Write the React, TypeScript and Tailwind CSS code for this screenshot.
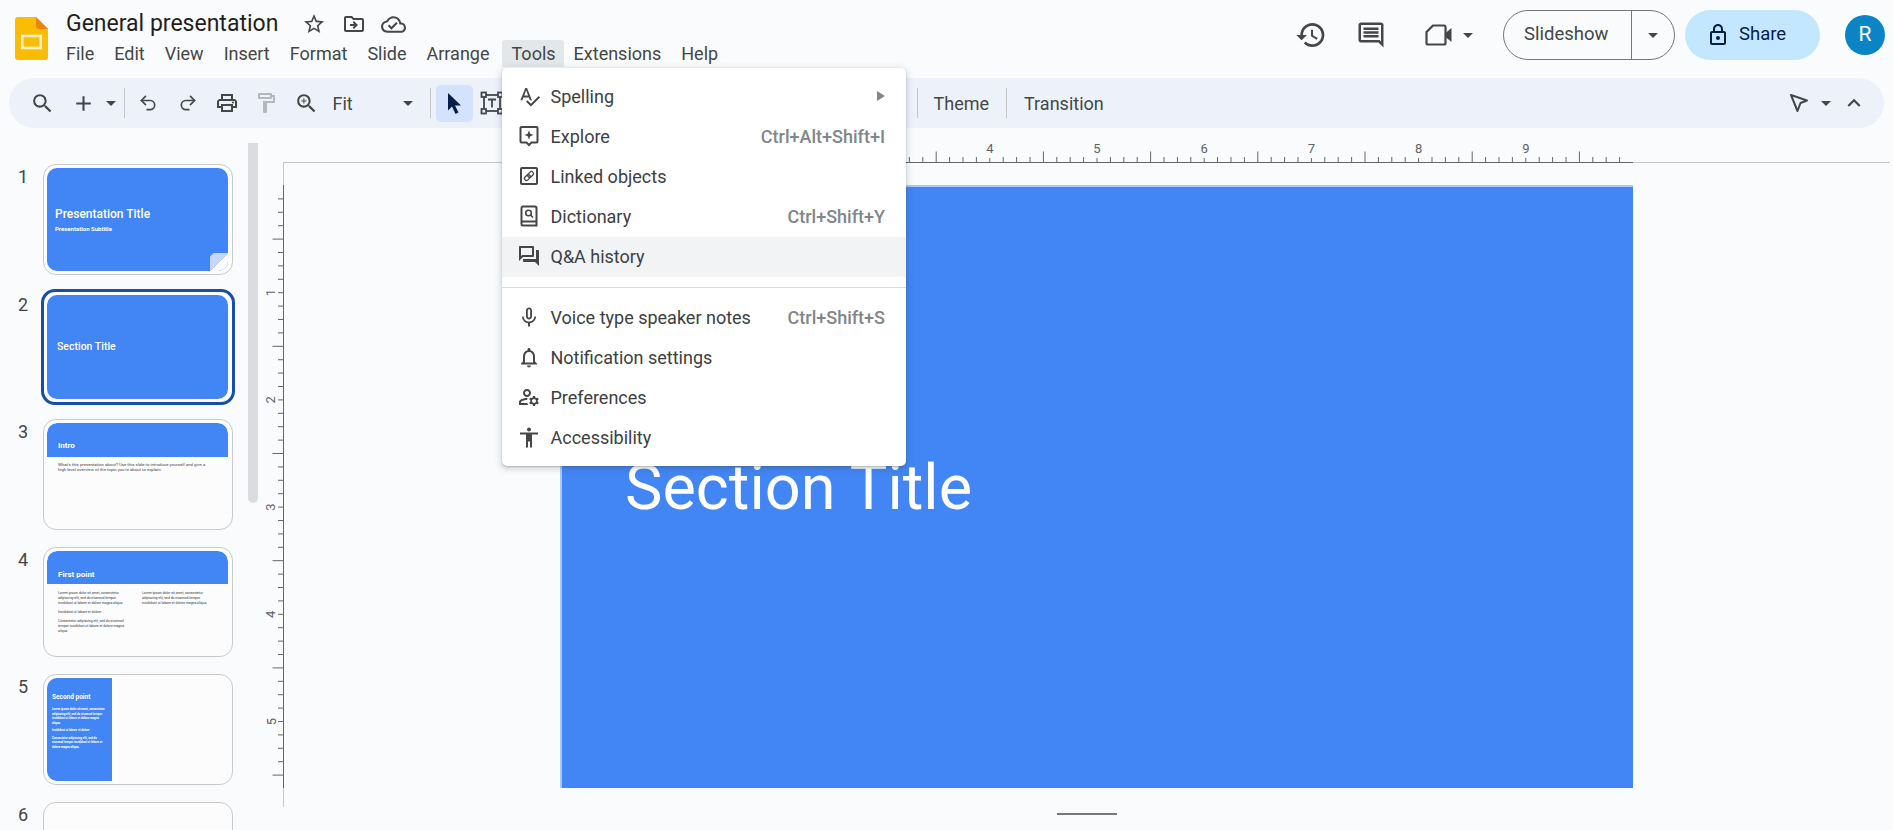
import {
  MdSearch, MdAdd, MdOutlinePrint, MdOutlineFormatPaint, MdOutlineZoomIn, MdOutlineStarBorder,
  MdOutlineDriveFileMove, MdOutlineCloudDone, MdHistory, MdOutlineComment, MdOutlineLock,
  MdSpellcheck, MdMicNone, MdNotificationsNone, MdAccessibility, MdOutlineManageAccounts,
  MdOutlineQuestionAnswer, MdKeyboardArrowUp,
} from 'react-icons/md'
import { Undo2, Redo2 } from 'lucide-react'
import type { ReactNode } from 'react'

const INCH = 107.2

function Caret({ className = '' }: { className?: string }) {
  return (
    <svg width="10" height="5" viewBox="0 0 10 5" className={className}>
      <path d="M0 0h10L5 5z" fill="currentColor" />
    </svg>
  )
}

function Logo() {
  return (
    <svg width="33" height="43" viewBox="0 0 33 43" className="shrink-0">
      <path d="M3 0h18l12 12v28a3 3 0 0 1-3 3H3a3 3 0 0 1-3-3V3a3 3 0 0 1 3-3z" fill="#fbbc04" />
      <path d="M21 0l12 12h-9a3 3 0 0 1-3-3z" fill="#ea8600" />
      <rect x="7.2" y="19" width="18.6" height="12" fill="none" stroke="#fff1c2" strokeWidth="2.6" />
    </svg>
  )
}

function TextBoxIcon() {
  return (
    <svg width="24" height="24" viewBox="0 0 24 24" fill="none" stroke="#444746" strokeWidth="1.8">
      <rect x="4" y="4" width="16" height="16" />
      <rect x="1.5" y="1.5" width="4.5" height="4.5" fill="#edf2fa" />
      <rect x="18" y="1.5" width="4.5" height="4.5" fill="#edf2fa" />
      <rect x="1.5" y="18" width="4.5" height="4.5" fill="#edf2fa" />
      <rect x="18" y="18" width="4.5" height="4.5" fill="#edf2fa" />
      <path d="M8 8.5h8M12 8.5v8" />
    </svg>
  )
}

function ExploreIcon() {
  return (
    <svg width="20" height="22" viewBox="0 0 20 22" fill="none">
      <path d="M2.5 2h15a1 1 0 0 1 1 1v13.5a1 1 0 0 1-1 1h-5L10 20l-2.5-2.5h-5a1 1 0 0 1-1-1V3a1 1 0 0 1 1-1z" stroke="#444746" strokeWidth="2" />
      <path d="M10 5.5l1.3 3.2 3.2 1.3-3.2 1.3L10 14.5l-1.3-3.2L5.5 10l3.2-1.3z" fill="#444746" />
    </svg>
  )
}

function LinkedIcon() {
  return (
    <svg width="20" height="20" viewBox="0 0 20 20" fill="none" stroke="#444746">
      <rect x="2" y="2" width="16" height="16" rx="1" strokeWidth="2" />
      <g transform="rotate(-45 10 10)" strokeWidth="1.3">
        <rect x="4.5" y="8" width="6.5" height="4" rx="2" />
        <rect x="9" y="8" width="6.5" height="4" rx="2" />
      </g>
    </svg>
  )
}

function DictionaryIcon() {
  return (
    <svg width="18" height="22" viewBox="0 0 18 22" fill="none" stroke="#444746" strokeWidth="2">
      <path d="M3 1.5h12a1.5 1.5 0 0 1 1.5 1.5v17.5H3A1.5 1.5 0 0 1 1.5 19V3A1.5 1.5 0 0 1 3 1.5z" />
      <path d="M1.5 16.5h15" />
      <circle cx="8.5" cy="8" r="2.8" strokeWidth="1.6" />
      <path d="M10.5 10l2.5 2.5" strokeWidth="1.6" />
    </svg>
  )
}

function MeetIcon() {
  return (
    <svg width="28" height="24" viewBox="0 0 28 24" fill="none">
      <path d="M8 2.5h11a1.5 1.5 0 0 1 1.5 1.5v16a1.5 1.5 0 0 1-1.5 1.5H3A1.5 1.5 0 0 1 1.5 20V9z" stroke="#444746" strokeWidth="2.2" strokeLinejoin="round" />
      <path d="M20.5 10l6-5v14l-6-5z" fill="#444746" />
    </svg>
  )
}

function CursorIcon() {
  return (
    <svg width="22" height="24" viewBox="0 0 22 24">
      <path d="M5 2l13 12.5h-6l3.5 7-3 1.5-3.5-7.5-4 4z" fill="#041e49" />
    </svg>
  )
}

function PenArrowIcon() {
  return (
    <svg width="22" height="24" viewBox="0 0 22 24" fill="none">
      <path d="M3 4l16 5.5-6.5 2.5-3 8z" stroke="#444746" strokeWidth="2" strokeLinejoin="round" />
    </svg>
  )
}

function HRuler() {
  const ticks = []
  for (let i = 1; i < 80; i++) {
    const x = 298 + (i / 8) * INCH
    const len = i % 8 === 0 ? 4 : i % 4 === 0 ? 10.5 : 5
    ticks.push(<line key={i} x1={x} x2={x} y1={34} y2={34 - len} stroke="#666" />)
  }
  // 1 to 3 sit behind the open menu
  const labels = [4, 5, 6, 7, 8, 9]
  return (
    <svg width="1630" height="35" className="block shrink-0">
      <line x1="20" x2="1627" y1="34.5" y2="34.5" stroke="#c4c7c5" />
      <line x1="298" x2="1370" y1="34.5" y2="34.5" stroke="#666" />
      {ticks}
      {labels.map((n) => (
        <text key={n} x={298 + n * INCH} y="25" fontSize="13" fill="#5f6368" textAnchor="middle" fontFamily="Roboto, sans-serif">{n}</text>
      ))}
    </svg>
  )
}

function VRuler() {
  const ticks = []
  for (let i = 1; i < 45; i++) {
    const y = 22.5 + (i / 8) * INCH
    const len = i % 4 === 0 && i % 8 !== 0 ? 10.5 : 5
    ticks.push(<line key={i} x1={20} x2={20 - len} y1={y} y2={y} stroke="#666" />)
  }
  return (
    <svg width="21" height="645" className="block shrink-0">
      <line x1="20.5" x2="20.5" y1="0" y2="644" stroke="#c4c7c5" />
      <line x1="20.5" x2="20.5" y1="22" y2="625" stroke="#666" />
      {ticks}
      {[1, 2, 3, 4, 5].map((n) => {
        const y = 22.5 + n * INCH
        return (
          <text key={n} x="8" y={y} fontSize="13" fill="#5f6368" textAnchor="middle" dominantBaseline="central" transform={`rotate(-90 8 ${y})`} fontFamily="Roboto, sans-serif">{n}</text>
        )
      })}
    </svg>
  )
}

function ThumbRow({ n, selected, children }: { n: number; selected?: boolean; children: ReactNode }) {
  return (
    <div className="flex h-[110.5px] shrink-0">
      <div className="w-[32px] pr-[4px] pt-[1px] text-right text-[18px] leading-[24px] text-[#444746]">{n}</div>
      <div className={selected
        ? 'ml-[9px] -my-[2.5px] box-border h-[115.5px] w-[194px] rounded-[14px] border-[3px] border-[#174ea6] bg-white p-[3px] pr-[4px]'
        : 'ml-[11px] h-[110.5px] w-[190px] rounded-[13px] border border-[#c7c9cb] bg-[#fcfcfd] p-[3px] pr-[4px]'}>
        <div className="relative h-full w-full overflow-hidden rounded-[10px]">{children}</div>
      </div>
    </div>
  )
}

const LOREM = 'Lorem ipsum dolor sit amet, consectetur adipiscing elit, sed do eiusmod tempor incididunt ut labore et dolore magna aliqua.'
const INCID = 'Incididunt ut labore et dolore'
const CONSEC = 'Consectetur adipiscing elit, sed do eiusmod tempor incididunt ut labore et dolore magna aliqua.'

function Sidebar() {
  return (
    <aside className="flex w-[263px] shrink-0 overflow-hidden">
      <div className="flex w-[248px] shrink-0 flex-col gap-[17px] pt-[36px]">
        <ThumbRow n={1}>
          <div className="flex h-full flex-col bg-[#4285f4] pl-[8px] pt-[38px] text-white">
            <div className="text-[12px] leading-[16px] font-medium">Presentation Title</div>
            <div className="mt-[3px] text-[6px] leading-[8px] font-bold">Presentation Subtitle</div>
          </div>
          <svg width="18" height="18" viewBox="0 0 18 18" className="absolute right-0 bottom-0">
            <path d="M18 0L0 18h18z" fill="#fcfcfd" />
            <path d="M0 3.5L3.5 0H18L0 18z" fill="#c6d7fb" />
          </svg>
        </ThumbRow>
        <ThumbRow n={2} selected>
          <div className="flex h-full items-center bg-[#4285f4] pl-[10px] pt-[1px] text-[10.5px] font-medium text-white">Section Title</div>
        </ThumbRow>
        <ThumbRow n={3}>
          <div className="flex h-[33.5px] items-end rounded-t-[10px] bg-[#4285f4] pb-[6px] pl-[11px] text-[8px] leading-[10px] font-bold text-white">Intro</div>
          <p className="mt-[5px] whitespace-nowrap pl-[11px] text-[4.3px] leading-[5.6px] text-[#444]">
            What's this presentation about? Use this slide to introduce yourself and give a<br />
            high level overview of the topic you're about to explain.
          </p>
        </ThumbRow>
        <ThumbRow n={4}>
          <div className="flex h-[33.5px] items-end rounded-t-[10px] bg-[#4285f4] pb-[4px] pl-[11px] text-[8px] leading-[11px] font-bold text-white">First point</div>
          <div className="mt-[6.5px] flex pl-[11px] text-[3.4px] leading-[5px] text-[#333]">
            <div className="w-[70px]">
              <p>{LOREM}</p>
              <p className="mt-[4px]">{INCID}</p>
              <p className="mt-[4px]">{CONSEC}</p>
            </div>
            <p className="ml-[14px] w-[70px]">{LOREM}</p>
          </div>
        </ThumbRow>
        <ThumbRow n={5}>
          <div className="h-full w-[65px] bg-[#4285f4] pl-[5px] pr-[5px] pt-[16px] text-white">
            <div className="text-[6.5px] leading-[7px] font-bold">Second point</div>
            <div className="mt-[6px] text-[2.9px] leading-[4.5px] font-bold">
              <p>{LOREM}</p>
              <p className="mt-[3px]">{INCID}</p>
              <p className="mt-[3px]">{CONSEC}</p>
            </div>
          </div>
        </ThumbRow>
        <ThumbRow n={6}>
          <div className="h-full" />
        </ThumbRow>
      </div>
      <div className="mt-[15px] h-[360px] w-[10px] shrink-0 rounded-b-[5px] bg-[#dadce0]" />
    </aside>
  )
}

function ToolBtn({ children, className = '' }: { children: ReactNode; className?: string }) {
  return <div className={'flex h-[37px] w-[39px] shrink-0 items-center justify-center ' + className}>{children}</div>
}

function Toolbar() {
  return (
    <div className="mx-[9px] flex h-[50px] shrink-0 items-center rounded-[25px] bg-[#edf2fa] pl-[13.5px] text-[#444746]">
      <ToolBtn><MdSearch size={25} /></ToolBtn>
      <ToolBtn className="ml-[2px]"><MdAdd size={25} /></ToolBtn>
      <Caret className="ml-[3px] shrink-0" />
      <div className="ml-[8px] h-[30px] w-px shrink-0 bg-[#c7c7c7]" />
      <ToolBtn className="ml-[4px]"><Undo2 size={20} strokeWidth={2} /></ToolBtn>
      <ToolBtn className="ml-[1px]"><Redo2 size={20} strokeWidth={2} /></ToolBtn>
      <ToolBtn><MdOutlinePrint size={24} /></ToolBtn>
      <ToolBtn className="text-[#b4b8bc]"><MdOutlineFormatPaint size={24} /></ToolBtn>
      <ToolBtn className="ml-[1px]"><MdOutlineZoomIn size={25} /></ToolBtn>
      <div className="ml-[7px] w-[70px] shrink-0 text-[18px]">Fit</div>
      <Caret className="shrink-0" />
      <div className="ml-[17px] h-[30px] w-px shrink-0 bg-[#c7c7c7]" />
      <div className="ml-[5px] flex h-[37px] w-[37px] shrink-0 items-center justify-center rounded-[5px] bg-[#d3e3fd]"><CursorIcon /></div>
      <ToolBtn><TextBoxIcon /></ToolBtn>
      <div className="ml-[405px] h-[30px] w-px shrink-0 bg-[#c7c7c7]" />
      <div className="ml-[16px] text-[18px]">Theme</div>
      <div className="ml-[17px] h-[30px] w-px shrink-0 bg-[#c7c7c7]" />
      <div className="ml-[17px] text-[18px]">Transition</div>
      <div className="ml-auto flex items-center pr-[17px]">
        <PenArrowIcon />
        <Caret className="ml-[11px]" />
        <MdKeyboardArrowUp size={26} className="ml-[10px]" />
      </div>
    </div>
  )
}

const MENUS = ['File', 'Edit', 'View', 'Insert', 'Format', 'Slide', 'Arrange', 'Tools', 'Extensions', 'Help']

function Header() {
  return (
    <header className="flex h-[78px] shrink-0">
      <div className="ml-[15px] mt-[17px]"><Logo /></div>
      <div className="ml-[18px] pt-[10px]">
        <div className="flex h-[28px] items-center text-[#444746]">
          <span className="w-[229px] text-[23px] leading-[28px] text-[#1f1f1f]">General presentation</span>
          <MdOutlineStarBorder size={24} className="ml-[7px]" />
          <MdOutlineDriveFileMove size={24} className="ml-[16px]" />
          <MdOutlineCloudDone size={25} className="ml-[15px]" />
        </div>
        <nav className="-ml-[10px] mt-[2px] flex h-[27px] text-[18px] leading-[27px] text-[#444746]">
          {MENUS.map((m) => (
            <div key={m} className={m === 'Tools' ? 'ml-[2px] rounded-t-[3px] bg-[#e3e7ea] pl-[10px] pr-[8px]' : 'px-[10px]'}>{m}</div>
          ))}
        </nav>
      </div>
      <div className="ml-auto flex h-[70px] items-center pr-[8px] text-[#444746]">
        <MdHistory size={32} />
        <MdOutlineComment size={30} className="ml-[29px]" />
        <div className="ml-[39px]"><MeetIcon /></div>
        <Caret className="ml-[10px]" />
        <div className="ml-[30px] flex h-[50px] w-[172px] items-center rounded-[25px] border border-[#747775]">
          <div className="w-[127px] pl-[20px] text-[18.5px] text-[#444746]">Slideshow</div>
          <div className="flex h-full flex-1 items-center justify-center border-l border-[#747775]"><Caret /></div>
        </div>
        <div className="ml-[10px] flex h-[50px] w-[135px] items-center rounded-[25px] bg-[#c2e7ff] pl-[21px] text-[#041e49]">
          <MdOutlineLock size={24} />
          <span className="ml-[9px] text-[18.5px]">Share</span>
        </div>
        <div className="ml-[25px] flex h-[40px] w-[40px] items-center justify-center rounded-full bg-[#0b84c6] text-[21px] text-white">R</div>
      </div>
    </header>
  )
}

type MenuEntry = { icon: ReactNode; label: string; shortcut?: string; arrow?: boolean; active?: boolean }

const TOP_ITEMS: MenuEntry[] = [
  { icon: <MdSpellcheck size={23} />, label: 'Spelling', arrow: true },
  { icon: <ExploreIcon />, label: 'Explore', shortcut: 'Ctrl+Alt+Shift+I' },
  { icon: <LinkedIcon />, label: 'Linked objects' },
  { icon: <DictionaryIcon />, label: 'Dictionary', shortcut: 'Ctrl+Shift+Y' },
  { icon: <MdOutlineQuestionAnswer size={24} />, label: 'Q&A history', active: true },
]

const BOTTOM_ITEMS: MenuEntry[] = [
  { icon: <MdMicNone size={25} />, label: 'Voice type speaker notes', shortcut: 'Ctrl+Shift+S' },
  { icon: <MdNotificationsNone size={25} />, label: 'Notification settings' },
  { icon: <MdOutlineManageAccounts size={24} />, label: 'Preferences' },
  { icon: <MdAccessibility size={25} />, label: 'Accessibility' },
]

function MenuRow({ item }: { item: MenuEntry }) {
  return (
    <div className={'box-border flex h-[40px] items-center pb-[2px] pl-[15px] pr-[21px] ' + (item.active ? 'bg-[#f1f3f4]' : '')}>
      <div className="flex w-[24px] justify-center text-[#444746]">{item.icon}</div>
      <span className="ml-[9.5px] text-[18px] text-[#3c4043]">{item.label}</span>
      {item.shortcut && <span className="ml-auto text-[18px] font-medium text-[#80868b]">{item.shortcut}</span>}
      {item.arrow && (
        <svg width="8" height="10" viewBox="0 0 8 10" className="ml-auto"><path d="M0 0l8 5-8 5z" fill="#80868b" /></svg>
      )}
    </div>
  )
}

function ToolsMenu() {
  return (
    <div className="absolute left-[502px] top-[68px] z-10 w-[404px] rounded-[5px] bg-white pb-[8px] pt-[9px] shadow-[0_2px_6px_2px_rgba(60,64,67,0.15),0_1px_2px_rgba(60,64,67,0.3)]">
      {TOP_ITEMS.map((it) => <MenuRow key={it.label} item={it} />)}
      <div className="my-[10px] h-px bg-[#dadce0]" />
      {BOTTOM_ITEMS.map((it) => <MenuRow key={it.label} item={it} />)}
    </div>
  )
}

export default function App() {
  return (
    <div className="relative flex h-[830px] w-[1893px] flex-col overflow-hidden bg-[#f9fbfd] font-['Roboto',sans-serif]">
      <Header />
      <Toolbar />
      <main className="flex min-h-0 flex-1">
        <Sidebar />
        <div className="flex min-w-0 flex-1 flex-col">
          <HRuler />
          <div className="flex">
            <VRuler />
            <div className="pl-[276px] pt-[22px]">
              <div className="box-border flex h-[603px] w-[1073px] items-center border-l-2 border-t-2 border-[#a8c7fa] bg-[#4285f4] pl-[63px] text-[63px] leading-[76px] text-white">
                <span>Section Title</span>
              </div>
              <div className="ml-[497px] mt-[25px] h-[2px] w-[60px] bg-[#777]" />
            </div>
          </div>
        </div>
      </main>
      <ToolsMenu />
    </div>
  )
}
